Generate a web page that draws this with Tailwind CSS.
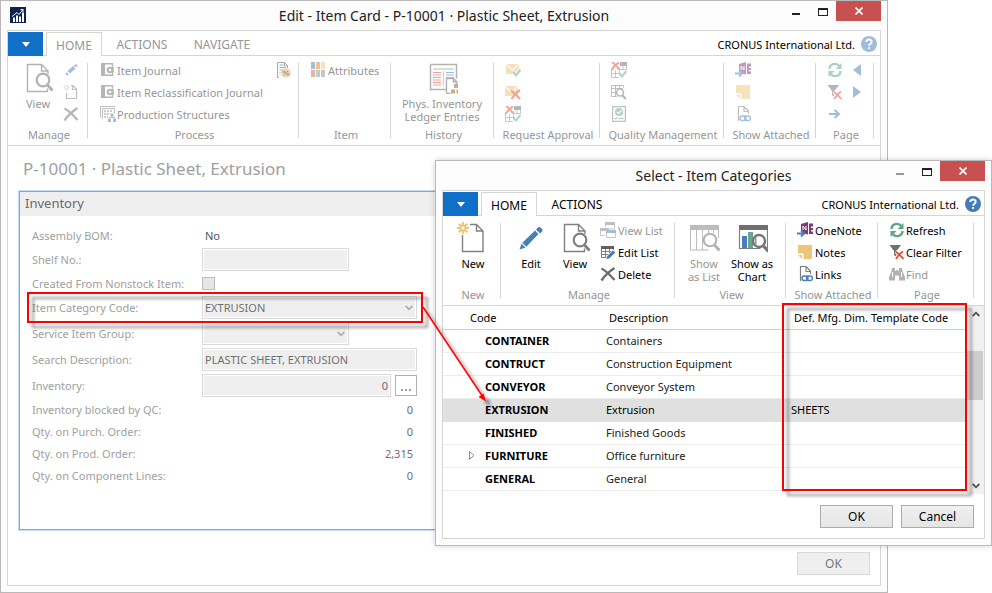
<!DOCTYPE html>
<html lang="en">
<head>
<meta charset="utf-8">
<meta name="viewport" content="width=device-width, initial-scale=1">
<title>Item Card</title>
<script src="https://cdn.jsdelivr.net/npm/@tailwindcss/browser@4"></script>
</head>
<body class="relative min-h-screen overflow-hidden bg-white font-['Noto_Sans','Open_Sans',sans-serif] text-[11px] leading-[13px] text-black">

<!-- Icon library -->
<svg class="hidden" aria-hidden="true">
  <symbol id="view" viewBox="0 0 32 32"><g fill="none" stroke="#808080"><path d="M16 29.5H5.5v-27h14l6.500 6.500v3M19.500 2.500v6.500h6.500" stroke-width="1.400"/><circle cx="21" cy="18" r="6.300" stroke-width="2.200"/><path d="M25.500 23l5 5.500" stroke-width="3"/><path d="M16 29.500h9.500v-3" stroke-width="1.400"/></g></symbol>
  <symbol id="new" viewBox="0 0 32 32"><path d="M5.500 13v16.500h20.500V9l-6.500-6.500H13M19.500 2.500v6.500h6.500" fill="none" stroke="#808080" stroke-width="1.400"/><g stroke="#eec67a" stroke-width="2" fill="none"><circle cx="6" cy="6" r="2.500"/><path d="M6 0v3M6 9v3M0 6h3M9 6h3M1.800 1.800l2 2M8.200 8.200l2 2M1.800 10.200l2-2M8.200 3.800l2-2"/></g></symbol>
  <symbol id="edit" viewBox="0 0 32 32"><path d="M4.500 27.500l2-6 4 4zM7.300 20.700L20 8.500l3.500 3.500L11.300 24.700zM21 7.500l2.500-2.500 1.500 0 2.500 2.500 0 1.500-2.500 2.500z" fill="#4a7ebb"/></symbol>
  <symbol id="history" viewBox="0 0 32 32"><path d="M4.500 2.500h26v14M20 27.500H4.500v-25" fill="none" stroke="#808080" stroke-width="1.500"/><path d="M7 6h21v2H7z" fill="#c4c4c4"/><path d="M7 10.500h8M7 13h8M7 15.500h8M7 18h8M7 20.500h8M7 23h8" stroke="#dd6050" stroke-width="1.200"/><path d="M20 10.500h8M20 13h8M20 15.500h8" stroke="#5a8fc8" stroke-width="1.200"/><path d="M17.500 9v15" stroke="#b0b0b0"/><path d="M20.500 31.500v-15h7l3.500 3.500v2M27.500 16.500v3.500h3.500M20.500 31.500h4" fill="none" stroke="#808080" stroke-width="1.400"/><path d="M28 22h4v4h-4zM25 27.500h4v4h-4zM30.500 27.500H34v4h-3.500z" fill="#a5763f"/></symbol>
  <symbol id="aslist" viewBox="0 0 32 32"><path d="M2 3h29v5H2z" fill="#909090"/><path d="M2.500 8v20h18M30.500 8v8M8.500 8v20M14.500 8v20M20.500 8v3M25.500 8v3" fill="none" stroke="#909090"/><circle cx="22" cy="18" r="6.300" fill="#fff" stroke="#808080" stroke-width="2"/><path d="M26.500 23l5 5.500" stroke="#808080" stroke-width="3"/></symbol>
  <symbol id="chart" viewBox="0 0 32 32"><path d="M3 3h29v5H3z" fill="#6f6f6f"/><path d="M3.500 8v18.500h21M31.500 8v18" fill="none" stroke="#808080" stroke-width="1.200"/><path d="M6 14h5v12H6z" fill="#4a7ebb"/><path d="M12 10h5v16h-5z" fill="#6ba58b"/><circle cx="23" cy="19" r="6" fill="#fff" stroke="#757575" stroke-width="2.400"/><path d="M19 15h1.500v8H19z" fill="#999"/><path d="M27.500 24l5 5.500" stroke="#757575" stroke-width="3.200"/></symbol>

  <symbol id="pencil" viewBox="0 0 16 16"><path d="M2.500 13.500l1-3.500 2.500 2.500zM4.500 9l5.500-5 2.500 2.500-5.500 5zM11 3.500L13 2l1.500 1.500-1.500 2z" fill="#4a7ebb"/></symbol>
  <symbol id="newdoc" viewBox="0 0 16 16"><path d="M3.500 9v5.500h10V5L10 1.500H8M9.500 1.500v4h4" fill="none" stroke="#808080" stroke-width="1.200"/><path d="M3.500.5v6M.5 3.500h6M1.300 1.300l4.400 4.400M5.700 1.300L1.300 5.700" stroke="#eeb765"/><circle cx="3.500" cy="3.500" r="1" fill="#fff"/></symbol>
  <symbol id="delete" viewBox="0 0 16 16"><path d="M1.500 2.500c4 2 9 7 13 11.500M14.500 2C10 5 5 9 1.500 14.500" fill="none" stroke="#6f6f6f" stroke-width="2.400"/></symbol>
  <symbol id="journal" viewBox="0 0 16 16"><path d="M1 1h4v13H1z" fill="#6f6f6f"/><path d="M5 1.700h7.500v3M12.500 11v2.300H5" fill="none" stroke="#6f6f6f" stroke-width="1.400"/><circle cx="10" cy="8" r="2.300" fill="none" stroke="#6f6f6f" stroke-width="2"/><path d="M12 5h1.800v6H12z" fill="#6f6f6f"/></symbol>
  <symbol id="structure" viewBox="0 0 16 16"><path d="M.5 11.500V.5H15M2.500 13V2.500H14.500v5" fill="none" stroke="#808080"/><path d="M4 5h9M4 8h6M4 11h4" stroke="#808080" stroke-width="1.500" stroke-dasharray="2 1"/><path d="M9.500 13v-1.500h5V13M12 9v3" stroke="#4a7ebb" fill="none"/><path d="M10.500 7.500h3v3h-3zM8 13h3v3H8zM13 13h3v3h-3z" fill="#4a7ebb"/></symbol>
  <symbol id="percent" viewBox="0 0 16 16"><path d="M4 15.500H2.500V.5h7l3 3V6M9.500.5v3.500h3" fill="none" stroke="#707070"/><path d="M4.500 3h4M4.500 5.500h6M4.500 8h3" stroke="#4a7ebb"/><path d="M4.500 10.500h1M4.500 13h1" stroke="#707070"/><circle cx="11" cy="11" r="5" fill="#f0c48c"/><path d="M13 8.500l-4 5" stroke="#444"/><circle cx="9" cy="9.800" r="1" fill="none" stroke="#444" stroke-width=".8"/><circle cx="13" cy="12.300" r="1" fill="none" stroke="#444" stroke-width=".8"/></symbol>
  <symbol id="attributes" viewBox="0 0 16 16"><path d="M1 0h4v7H1z" fill="#4a7ebb"/><path d="M6 0h4v7H6z" fill="#e08030"/><path d="M11 0h4v7h-4z" fill="#eec67a"/><path d="M1 8h4v7H1z" fill="#dd6050"/><path d="M6 8h4v7H6z" fill="#6ba58b"/><path d="M11 8h4v7h-4z" fill="#909090"/></symbol>
  <symbol id="mailok" viewBox="0 0 16 16"><path d="M1 2h13v10H1z" fill="#edc379"/><path d="M1 2.500l6.500 5.500L14 2.500" fill="none" stroke="#fff" stroke-width="1.200"/><path d="M8 10.500l3 3 4.500-6" fill="none" stroke="#fff" stroke-width="4"/><path d="M8 10l3 3.300L15.500 7.500" fill="none" stroke="#6ba58b" stroke-width="2.200"/></symbol>
  <symbol id="mailno" viewBox="0 0 16 16"><path d="M0 2h13v10H0z" fill="#edc379"/><path d="M0 2.500l6.500 5.500L13 2.500" fill="none" stroke="#fff" stroke-width="1.200"/><path d="M6 6.500c3 2 6 5 9 8.500M15 6c-3 2-6 5-8.500 9" fill="none" stroke="#dc5038" stroke-width="2.200"/></symbol>
  <symbol id="gridmix" viewBox="0 0 16 16"><path d="M9 0h7v4H9z" fill="#707070"/><path d="M.5 8v7.500H8M.5 11.500H8M4.500 8v7.500M15.500 4v4M8.500 5v7M8 7.500h7M12 4v4M8 11.500h2" fill="none" stroke="#909090"/><path d="M1 0c3 2 5 4 7 7.500M8 .5C5 2 3 4 .5 8" fill="none" stroke="#dc5038" stroke-width="2"/><path d="M8.500 12l2.500 2.500L15.500 9" fill="none" stroke="#6ba58b" stroke-width="2"/></symbol>
  <symbol id="gridfind" viewBox="0 0 16 16"><path d="M.5 12.500V1.500h12v2M.5 12.500H6M1 4.500h11M1 8.500h4M4.500 2v10M8.500 2v2" fill="none" stroke="#808080"/><circle cx="9" cy="8.500" r="3.500" fill="#fff" stroke="#707070" stroke-width="1.500"/><path d="M11.500 11.500L15 15" stroke="#707070" stroke-width="2.200"/></symbol>
  <symbol id="quality" viewBox="0 0 16 16"><path d="M1.600.600h12.800v14.800H1.600z" fill="none" stroke="#808080" stroke-width="1.200"/><circle cx="8" cy="6" r="4" fill="#6ba58b"/><path d="M6 6l1.500 1.500L10.500 4.500" fill="none" stroke="#fff" stroke-width="1.200"/><path d="M3.500 12l1 1.200 1.500-2.200M7.500 12.500h2M10.500 12.500h2" fill="none" stroke="#606060"/></symbol>
  <symbol id="onenote" viewBox="0 0 16 16"><path d="M4 2l7-2v12.500L4 11z" fill="#80397b"/><path d="M12 1.500h4v3h-2V6h2v2h-2v1.500h2V12h-4z" fill="#80397b"/><path d="M6 8V4l3 4V4" fill="none" stroke="#fff"/><path d="M0 11.500h6" stroke="#fff" stroke-width="4"/><path d="M0 11.500h6.500M4 8.500l3.200 3L4 14.500" fill="none" stroke="#4a7ebb" stroke-width="1.800"/></symbol>
  <symbol id="note" viewBox="0 0 16 16"><path d="M1 1h14v14H6.500V9.500H1z" fill="#eec67a"/><path d="M1 11h4v4z" fill="#eec67a"/></symbol>
  <symbol id="links" viewBox="0 0 16 16"><path d="M4 14.500H3.500V.500H9l4.500 4.500V8M9 .5V5.500h4.500" fill="none" stroke="#808080" stroke-width="1.200"/><g fill="none" stroke="#4a7ebb" stroke-width="1.400"><rect x="5" y="10" width="6" height="4.500" rx="2.200"/><rect x="9.500" y="10" width="6" height="4.500" rx="2.200"/></g></symbol>
  <symbol id="refresh" viewBox="0 0 16 16"><path d="M2.500 7c0-5.500 7-6.500 10-3M13.500 9c0 5.500-7 6.500-10 3" fill="none" stroke="#5fa583" stroke-width="2.400"/><path d="M14.500 1v6H8.500zM1.500 15V9h6z" fill="#5fa583"/></symbol>
  <symbol id="nofilter" viewBox="0 0 16 16"><path d="M.5 1h11.500L7.500 7v6L5 11V7z" fill="#707070"/><path d="M6.500 7.500c3 2 5 4 8 7.500M14 7.500c-3 2-5 4-7 7.500" fill="none" stroke="#fff" stroke-width="3.500"/><path d="M6.500 7.500c3 2 5 4 8 7.500M14 7.500c-3 2-5 4-7 7.500" fill="none" stroke="#dc5038" stroke-width="1.800"/></symbol>
  <symbol id="goto" viewBox="0 0 16 16"><path d="M2 8h10M7.500 4l4.500 4-4.500 4" fill="none" stroke="#4a7ebb" stroke-width="2"/></symbol>
  <symbol id="prev" viewBox="0 0 16 16"><path d="M12 2v12L4 8z" fill="#4a7ebb"/></symbol>
  <symbol id="next" viewBox="0 0 16 16"><path d="M4 2v12l8-6z" fill="#4a7ebb"/></symbol>
  <symbol id="viewlist" viewBox="0 0 16 16"><path d="M5 0h10v3H5zM0 6h9v3H0z" fill="#808080"/><path d="M5.500 3v2M14.500 3v4H9.500M.5 9v4.500h4" fill="none" stroke="#909090"/><path d="M6 8h10v3H6z" fill="#4a7ebb"/><path d="M6.500 11v4.500h9V11" fill="none" stroke="#909090"/></symbol>
  <symbol id="editlist" viewBox="0 0 16 16"><path d="M1 2h13v3H1z" fill="#606060"/><path d="M1.500 5v8.500H6M13.500 5v1M2 7.500h9M2 10.500h6M5.500 5v8M9.500 5v4" fill="none" stroke="#808080"/><path d="M6 15.500l1-3.500 6-6 2.500 2.500-6 6z" fill="#4a7ebb" stroke="#fff" stroke-width=".5"/></symbol>
  <symbol id="find" viewBox="0 0 16 16"><path d="M3 2h3v3h1V4h2v1h1V2h3l.5 3L16 11v3.500h-6V9.500H6v5H0V11l2.500-6z" fill="#808080"/><path d="M3.500 6v5M12.500 6v5" stroke="#fff"/></symbol>
  <symbol id="help" viewBox="0 0 16 16"><circle cx="8" cy="8" r="8" fill="#447bb8"/><path d="M5.300 6c0-3.400 5.400-3.300 5.400-.2 0 2-2.600 1.900-2.600 4M8.100 11v2" fill="none" stroke="#fff" stroke-width="1.900"/></symbol>
  <symbol id="chevdown" viewBox="0 0 8 6"><path d="M.7 1L4 4.300 7.300 1" fill="none" stroke="currentColor" stroke-width="1.800"/></symbol>
</svg>

<!-- Item Card window -->
<section aria-label="Item Card" class="absolute top-0 right-[104px] left-0 flex min-h-screen flex-col border border-[#b9b9b9] bg-[#fcfcfc] px-[6px] pb-[6px]">
  <header class="relative flex h-[29px] items-center justify-center">
    <svg class="absolute top-[6px] left-[3px] size-4" viewBox="0 0 16 16" aria-hidden="true"><path d="M0 0h16v16H0z" fill="#0c2350"/><path d="M3 10.500h2V15H3zM6 8.500h2V15H6zM9 9.500h2V15H9zM12 5.500h2V15h-2z" fill="#fff"/><path d="M2 9.500l5-4 2 2 4-5M10.500 2.500H13V5" fill="none" stroke="#fff"/></svg>
    <h1 class="text-[14px] leading-5 text-[#222]">Edit - Item Card - P-10001 · Plastic Sheet, Extrusion</h1>
    <div class="absolute top-0 right-0 flex">
      <button aria-label="Minimize" class="flex h-5 w-7 items-center justify-center pt-[2px] pl-1"><span class="mt-1 h-[2px] w-2 bg-[#222]"></span></button>
      <button aria-label="Maximize" class="flex h-5 w-7 items-center justify-center pt-px pl-[2px]"><span class="h-2 w-[10px] border border-t-2 border-[#222]"></span></button>
      <button aria-label="Close" class="flex h-5 w-[45px] items-center justify-center bg-[#c75050]"><svg class="size-2" viewBox="0 0 8 8"><path d="M.5.5l7 7M7.500.5l-7 7" stroke="#fff" stroke-width="1.600"/></svg></button>
    </div>
  </header>

  <div class="flex flex-1 flex-col border border-[#d5d5d5] bg-white">
    <nav class="flex h-[25px] items-end text-[12px] leading-4 text-[#969696]">
      <button aria-label="Application menu" class="flex h-6 w-[35px] items-center justify-center bg-[#1070c8]"><span class="size-0 border-x-4 border-t-[5px] border-x-transparent border-t-white"></span></button>
      <div class="h-px w-[3px] bg-[#d5d5d5]"></div>
      <button class="h-6 w-14 border border-b-0 border-[#d5d5d5] pt-[2px]">HOME</button>
      <div class="flex h-6 flex-1 items-center border-b border-[#d5d5d5]">
        <button class="w-20 pt-[2px]">ACTIONS</button>
        <button class="w-20 pt-[2px]">NAVIGATE</button>
        <span class="ml-auto pt-[2px] text-[11px] text-black">CRONUS International Ltd.</span>
        <button aria-label="Help" class="mr-[3px] ml-[6px] opacity-50"><svg class="size-4"><use href="#help"/></svg></button>
      </div>
    </nav>

    <div class="flex border-b border-[#d5d5d5] pt-[3px] text-[#969696]">
      <div class="flex w-[79px] flex-col">
        <div class="flex h-[66px]">
          <button class="flex w-[60px] flex-col items-center pt-[3px]"><svg class="size-8 opacity-60"><use href="#view"/></svg><span class="mt-[3px]">View</span></button>
          <div class="-ml-[5px] opacity-50">
            <button aria-label="Edit" class="flex h-[22px] items-center"><svg class="size-4"><use href="#pencil"/></svg></button>
            <button aria-label="New" class="flex h-[22px] items-center"><svg class="size-4"><use href="#newdoc"/></svg></button>
            <button aria-label="Delete" class="flex h-[22px] items-center"><svg class="size-4"><use href="#delete"/></svg></button>
          </div>
        </div>
        <div class="h-5 pl-[3px] text-center leading-5">Manage</div>
      </div>
      <div class="mt-1 mb-[7px] w-px bg-[#d5d5d5]"></div>
      <div class="flex w-[210px] flex-col">
        <div class="flex h-[66px] justify-between pr-[7px] pl-3">
          <div>
            <button class="flex h-[22px] items-center gap-px"><svg class="size-4 opacity-50"><use href="#journal"/></svg>Item Journal</button>
            <button class="flex h-[22px] items-center gap-px"><svg class="size-4 opacity-50"><use href="#journal"/></svg>Item Reclassification Journal</button>
            <button class="flex h-[22px] items-center gap-px"><svg class="size-4 opacity-50"><use href="#structure"/></svg>Production Structures</button>
          </div>
          <button aria-label="Discounts" class="flex h-[22px] items-center"><svg class="size-4 opacity-60"><use href="#percent"/></svg></button>
        </div>
        <div class="h-5 pl-[3px] text-center leading-5">Process</div>
      </div>
      <div class="mt-1 mb-[7px] w-px bg-[#d5d5d5]"></div>
      <div class="flex w-[91px] flex-col">
        <div class="h-[66px] pl-[11px]">
          <button class="flex h-[22px] items-center gap-[2px]"><svg class="size-4 opacity-50"><use href="#attributes"/></svg>Attributes</button>
        </div>
        <div class="h-5 pl-[3px] text-center leading-5">Item</div>
      </div>
      <div class="mt-1 mb-[7px] w-px bg-[#d5d5d5]"></div>
      <div class="flex w-[102px] flex-col">
        <button class="flex h-[66px] flex-col items-center pt-[3px]"><svg class="size-8 overflow-visible opacity-60"><use href="#history"/></svg><span class="mt-[3px]">Phys. Inventory<br>Ledger Entries</span></button>
        <div class="h-5 pl-[3px] text-center leading-5">History</div>
      </div>
      <div class="mt-1 mb-[7px] w-px bg-[#d5d5d5]"></div>
      <div class="flex w-[105px] flex-col">
        <div class="h-[66px] pl-[11px] opacity-50">
          <button aria-label="Approve request" class="flex h-[22px] items-center"><svg class="size-4"><use href="#mailok"/></svg></button>
          <button aria-label="Cancel request" class="flex h-[22px] items-center"><svg class="size-4"><use href="#mailno"/></svg></button>
          <button aria-label="Approvals" class="flex h-[22px] items-center"><svg class="size-4"><use href="#gridmix"/></svg></button>
        </div>
        <div class="h-5 pl-[3px] text-center leading-5 whitespace-nowrap">Request Approval</div>
      </div>
      <div class="mt-1 mb-[7px] w-px bg-[#d5d5d5]"></div>
      <div class="flex w-[123px] flex-col">
        <div class="h-[66px] pl-[11px] opacity-50">
          <button aria-label="Quality tests" class="flex h-[22px] items-center"><svg class="size-4"><use href="#gridmix"/></svg></button>
          <button aria-label="Find tests" class="flex h-[22px] items-center"><svg class="size-4"><use href="#gridfind"/></svg></button>
          <button aria-label="Quality orders" class="flex h-[22px] items-center"><svg class="size-4"><use href="#quality"/></svg></button>
        </div>
        <div class="h-5 pl-[3px] text-center leading-5 whitespace-nowrap">Quality Management</div>
      </div>
      <div class="mt-1 mb-[7px] w-px bg-[#d5d5d5]"></div>
      <div class="flex w-[91px] flex-col">
        <div class="h-[66px] pl-[11px] opacity-50">
          <button aria-label="OneNote" class="flex h-[22px] items-center"><svg class="size-4"><use href="#onenote"/></svg></button>
          <button aria-label="Notes" class="flex h-[22px] items-center"><svg class="size-4"><use href="#note"/></svg></button>
          <button aria-label="Links" class="flex h-[22px] items-center"><svg class="size-4"><use href="#links"/></svg></button>
        </div>
        <div class="h-5 pl-[3px] text-center leading-5 whitespace-nowrap">Show Attached</div>
      </div>
      <div class="mt-1 mb-[7px] w-px bg-[#d5d5d5]"></div>
      <div class="flex w-[57px] flex-col">
        <div class="flex h-[66px] gap-[6px] pl-[11px] opacity-50">
          <div>
            <button aria-label="Refresh" class="flex h-[22px] items-center"><svg class="size-4"><use href="#refresh"/></svg></button>
            <button aria-label="Clear filter" class="flex h-[22px] items-center"><svg class="size-4"><use href="#nofilter"/></svg></button>
            <button aria-label="Go to" class="flex h-[22px] items-center"><svg class="size-4"><use href="#goto"/></svg></button>
          </div>
          <div>
            <button aria-label="Previous" class="flex h-[22px] items-center"><svg class="size-4"><use href="#prev"/></svg></button>
            <button aria-label="Next" class="flex h-[22px] items-center"><svg class="size-4"><use href="#next"/></svg></button>
          </div>
        </div>
        <div class="h-5 pl-[3px] text-center leading-5">Page</div>
      </div>
      <div class="mt-1 mb-[7px] w-px bg-[#d5d5d5]"></div>
    </div>

    <h2 class="mt-[11px] pl-[15px] text-[17px] leading-6 text-[#a0a0a0]">P-10001 · Plastic Sheet, Extrusion</h2>

    <section class="mx-[11px] mt-[10px] flex-1 border border-[#76a9f0] shadow-[0_0_0_1px_#c6dcfb]">
      <h3 class="h-6 bg-[#efefef] pl-[5px] text-[13px] leading-[23px] text-[#6a6a6a]">Inventory</h3>
      <form class="mt-2 pl-3 text-[#a0a0a0]">
        <div class="flex h-[22px] items-center"><span class="w-[170px]">Assembly BOM:</span><span class="pl-[3px] text-[#555]">No</span></div>
        <div class="flex h-[26px] items-center"><label for="shelf" class="w-[170px]">Shelf No.:</label><input id="shelf" disabled class="h-[23px] w-[147px] border border-[#d9d9d9] bg-[#efefef] px-[2px] inset-ring inset-ring-white"></div>
        <div class="flex h-[22px] items-center"><label for="nonstock" class="w-[170px] whitespace-nowrap">Created From Nonstock Item:</label><input id="nonstock" type="checkbox" disabled class="size-[13px] appearance-none border border-[#bcbcbc] bg-[#e6e6e6]"></div>
        <div class="flex h-[26px] items-center"><label for="category" class="w-[170px]">Item Category Code:</label>
          <div class="relative"><select id="category" disabled class="h-[23px] w-[215px] appearance-none border border-[#d9d9d9] bg-[#efefef] px-[2px] text-[#6f6f6f] inset-ring inset-ring-white"><option>EXTRUSION</option></select><svg class="absolute top-[9px] right-[4px] h-[6px] w-2 text-[#b0b0b0]"><use href="#chevdown"/></svg></div></div>
        <div class="flex h-[26px] items-center"><label for="service" class="w-[170px]">Service Item Group:</label>
          <div class="relative"><select id="service" disabled class="h-[23px] w-[147px] appearance-none border border-[#d9d9d9] bg-[#efefef] px-[2px] inset-ring inset-ring-white"><option></option></select><svg class="absolute top-[9px] right-[4px] h-[6px] w-2 text-[#b0b0b0]"><use href="#chevdown"/></svg></div></div>
        <div class="flex h-[26px] items-center"><label for="search" class="w-[170px]">Search Description:</label><input id="search" disabled value="PLASTIC SHEET, EXTRUSION" class="h-[23px] w-[215px] border border-[#d9d9d9] bg-[#efefef] px-[2px] text-[#6f6f6f] inset-ring inset-ring-white"></div>
        <div class="flex h-[26px] items-center"><label for="inventory" class="w-[170px]">Inventory:</label><input id="inventory" disabled value="0" class="h-[23px] w-[189px] border border-[#d9d9d9] bg-[#efefef] px-[2px] text-right text-[#6f6f6f] inset-ring inset-ring-white"><button type="button" aria-label="Look up" class="ml-1 flex h-[21px] w-[22px] items-end justify-center gap-[2px] border border-[#b0b0b0] pb-1"><span class="size-[2px] bg-[#a0a0a0]"></span><span class="size-[2px] bg-[#a0a0a0]"></span><span class="size-[2px] bg-[#a0a0a0]"></span></button></div>
        <div class="flex h-[22px] items-center"><span class="w-[170px]">Inventory blocked by QC:</span><span class="w-[211px] text-right text-[#6f6f6f]">0</span></div>
        <div class="flex h-[22px] items-center"><span class="w-[170px]">Qty. on Purch. Order:</span><span class="w-[211px] text-right text-[#6f6f6f]">0</span></div>
        <div class="flex h-[22px] items-center"><span class="w-[170px]">Qty. on Prod. Order:</span><span class="w-[211px] text-right text-[#6f6f6f]">2,315</span></div>
        <div class="flex h-[22px] items-center"><span class="w-[170px]">Qty. on Component Lines:</span><span class="w-[211px] text-right text-[#6f6f6f]">0</span></div>
      </form>
    </section>
    <footer class="flex justify-end pt-[22px] pr-[10px] pb-[10px]">
      <button disabled class="h-[23px] w-[73px] border border-[#d9d9d9] bg-[#efefef] text-[12px] text-[#777]">OK</button>
    </footer>
  </div>
</section>

<!-- Item Categories window -->
<section aria-label="Item Categories" class="absolute top-[160px] right-0 left-[435px] border border-[#b9b9b9] bg-[#fcfcfc] px-[6px] pb-[6px] shadow-[0_0_6px_#00000030]">
  <header class="relative flex h-[29px] items-center justify-center">
    <h1 class="text-[14px] leading-5 text-[#222]">Select - Item Categories</h1>
    <div class="absolute top-0 right-0 flex">
      <button aria-label="Minimize" class="flex h-5 w-7 items-center justify-center pt-[2px] pl-1"><span class="mt-1 h-[2px] w-2 bg-[#999]"></span></button>
      <button aria-label="Maximize" class="flex h-5 w-7 items-center justify-center pt-px pl-[2px]"><span class="h-2 w-[10px] border border-t-2 border-[#222]"></span></button>
      <button aria-label="Close" class="flex h-5 w-[45px] items-center justify-center bg-[#c75050]"><svg class="size-2" viewBox="0 0 8 8"><path d="M.5.5l7 7M7.500.5l-7 7" stroke="#fff" stroke-width="1.600"/></svg></button>
    </div>
  </header>

  <div class="border border-[#d5d5d5] bg-white">
    <nav class="flex h-[25px] items-end text-[12px] leading-4">
      <button aria-label="Application menu" class="flex h-6 w-[35px] items-center justify-center bg-[#1070c8]"><span class="size-0 border-x-4 border-t-[5px] border-x-transparent border-t-white"></span></button>
      <div class="h-px w-[3px] bg-[#d5d5d5]"></div>
      <button class="h-6 w-14 border border-b-0 border-[#d5d5d5] pt-[2px]">HOME</button>
      <div class="flex h-6 flex-1 items-center border-b border-[#d5d5d5]">
        <button class="w-20 pt-[2px]">ACTIONS</button>
        <span class="ml-auto pt-[2px] text-[11px]">CRONUS International Ltd.</span>
        <button aria-label="Help" class="mr-[3px] ml-[6px]"><svg class="size-4"><use href="#help"/></svg></button>
      </div>
    </nav>

    <div class="flex border-b border-[#d5d5d5] pt-[3px]">
      <div class="flex w-[57px] flex-col">
        <button class="flex h-[66px] flex-col items-center pt-[3px] pl-[3px]"><svg class="size-8"><use href="#new"/></svg><span class="mt-[3px]">New</span></button>
        <div class="h-5 pl-[3px] text-center leading-5 text-[#969696]">New</div>
      </div>
      <div class="mt-1 mb-[7px] w-px bg-[#d5d5d5]"></div>
      <div class="flex w-[173px] flex-col">
        <div class="flex h-[66px] pl-2">
          <button class="flex w-11 flex-col items-center pt-[3px]"><svg class="size-8"><use href="#edit"/></svg><span class="mt-[3px]">Edit</span></button>
          <button class="flex w-11 flex-col items-center pt-[3px]"><svg class="size-8"><use href="#view"/></svg><span class="mt-[3px]">View</span></button>
          <div class="pl-[3px] whitespace-nowrap">
            <button class="flex h-[22px] items-center gap-[2px] text-[#969696]"><svg class="size-4 opacity-50"><use href="#viewlist"/></svg>View List</button>
            <button class="flex h-[22px] items-center gap-[2px]"><svg class="size-4"><use href="#editlist"/></svg>Edit List</button>
            <button class="flex h-[22px] items-center gap-[2px]"><svg class="size-4"><use href="#delete"/></svg>Delete</button>
          </div>
        </div>
        <div class="h-5 pl-[3px] text-center leading-5 text-[#969696]">Manage</div>
      </div>
      <div class="mt-1 mb-[7px] w-px bg-[#d5d5d5]"></div>
      <div class="flex w-[110px] flex-col">
        <div class="flex h-[66px] pl-[5px]">
          <button class="flex w-12 flex-col items-center pt-[3px] text-[#969696]"><svg class="size-8 opacity-60"><use href="#aslist"/></svg><span class="mt-[3px]">Show<br>as List</span></button>
          <button class="flex w-12 flex-col items-center pt-[3px]"><svg class="size-8 overflow-visible"><use href="#chart"/></svg><span class="mt-[3px] whitespace-nowrap">Show as<br>Chart</span></button>
        </div>
        <div class="h-5 pl-[3px] text-center leading-5 text-[#969696]">View</div>
      </div>
      <div class="mt-1 mb-[7px] w-px bg-[#d5d5d5]"></div>
      <div class="flex w-[91px] flex-col">
        <div class="h-[66px] pl-[11px]">
          <button class="flex h-[22px] items-center gap-[2px]"><svg class="size-4"><use href="#onenote"/></svg>OneNote</button>
          <button class="flex h-[22px] items-center gap-[2px]"><svg class="size-4"><use href="#note"/></svg>Notes</button>
          <button class="flex h-[22px] items-center gap-[2px]"><svg class="size-4"><use href="#links"/></svg>Links</button>
        </div>
        <div class="h-5 pl-[3px] text-center leading-5 whitespace-nowrap text-[#969696]">Show Attached</div>
      </div>
      <div class="mt-1 mb-[7px] w-px bg-[#d5d5d5]"></div>
      <div class="flex w-[95px] flex-col">
        <div class="h-[66px] pl-[11px] whitespace-nowrap">
          <button class="flex h-[22px] items-center gap-px"><svg class="size-4"><use href="#refresh"/></svg>Refresh</button>
          <button class="flex h-[22px] items-center gap-px"><svg class="size-4"><use href="#nofilter"/></svg>Clear Filter</button>
          <button class="flex h-[22px] items-center gap-px text-[#969696]"><svg class="size-4 opacity-60"><use href="#find"/></svg>Find</button>
        </div>
        <div class="h-5 pl-[3px] text-center leading-5 text-[#969696]">Page</div>
      </div>
      <div class="mt-1 mb-[7px] w-px bg-[#d5d5d5]"></div>
    </div>

    <div class="flex min-h-[188px]">
      <div class="flex-1">
        <table class="w-full table-fixed border-collapse text-left">
          <thead>
            <tr class="h-[23px] border-b border-[#d0d0d0]">
              <th class="w-[160px] pl-[27px] font-normal">Code</th>
              <th class="w-[185px] pl-[6px] font-normal">Description</th>
              <th class="pl-[6px] font-normal whitespace-nowrap">Def. Mfg. Dim. Template Code</th>
            </tr>
          </thead>
          <tbody>
            <tr class="h-[23px] border-b border-[#ececec]"><td class="pl-[42px] font-bold">CONTAINER</td><td class="pl-[3px] text-[#222]">Containers</td><td></td></tr>
            <tr class="h-[23px] border-b border-[#ececec]"><td class="pl-[42px] font-bold">CONTRUCT</td><td class="pl-[3px] text-[#222]">Construction Equipment</td><td></td></tr>
            <tr class="h-[23px] border-b border-[#ececec]"><td class="pl-[42px] font-bold">CONVEYOR</td><td class="pl-[3px] text-[#222]">Conveyor System</td><td></td></tr>
            <tr class="h-[23px] border-b border-[#e0e0e0] bg-[#e0e0e0]"><td class="pl-[42px] font-bold">EXTRUSION</td><td class="pl-[3px]">Extrusion</td><td class="pl-[3px]">SHEETS</td></tr>
            <tr class="h-[23px] border-b border-[#ececec]"><td class="pl-[42px] font-bold">FINISHED</td><td class="pl-[3px] text-[#222]">Finished Goods</td><td></td></tr>
            <tr class="h-[23px] border-b border-[#ececec]"><td class="pl-[26px] font-bold"><div class="flex items-center"><button aria-label="Expand" class="w-4"><svg class="h-[9px] w-[6px]" viewBox="0 0 6 9"><path d="M.5.7v7.600l4.500-3.800z" fill="#fff" stroke="#888"/></svg></button>FURNITURE</div></td><td class="pl-[3px] text-[#222]">Office furniture</td><td></td></tr>
            <tr class="h-[23px] border-b border-[#ececec]"><td class="pl-[42px] font-bold">GENERAL</td><td class="pl-[3px] text-[#222]">General</td><td></td></tr>
          </tbody>
        </table>
      </div>
      <div class="flex w-[17px] flex-col items-center bg-[#f0f0f0] text-[#505050]">
        <button aria-label="Scroll up" class="flex h-4 w-full items-center justify-center"><svg class="h-[6px] w-2 rotate-180"><use href="#chevdown"/></svg></button>
        <div class="flex w-full flex-1 flex-col pt-[29px] pr-px"><div class="h-[49px] bg-[#cdcdcd]"></div></div>
        <button aria-label="Scroll down" class="flex h-4 w-full items-center justify-center"><svg class="h-[6px] w-2"><use href="#chevdown"/></svg></button>
      </div>
    </div>

    <footer class="flex justify-end gap-2 pt-[11px] pr-[10px] pb-[10px]">
      <button class="h-[23px] w-[73px] border border-[#acacac] bg-linear-to-b from-[#f0f0f0] to-[#e5e5e5] text-[12px]">OK</button>
      <button class="h-[23px] w-[73px] border border-[#acacac] bg-linear-to-b from-[#f0f0f0] to-[#e5e5e5] text-[12px]">Cancel</button>
    </footer>
  </div>
</section>

<!-- Callouts: field, arrow and column -->
<svg class="pointer-events-none absolute top-0 left-0 h-[593px] w-[992px]" viewBox="0 0 992 593" aria-hidden="true">
  <defs><filter id="shade" filterUnits="userSpaceOnUse" x="0" y="0" width="992" height="593"><feDropShadow dx="5" dy="5" stdDeviation="1.800" flood-color="#000" flood-opacity=".4"/></filter></defs>
  <g filter="url(#shade)" fill="none" stroke="#f00" stroke-width="2">
    <rect x="28" y="293" width="394" height="29"/>
    <rect x="783" y="304" width="183" height="186"/>
    <path d="M423 307L483 397" stroke-width="1.500"/>
    <path d="M486 401.500l-7.500-4.500 5-3.500z" fill="#f00" stroke="none"/>
  </g>
</svg>
</body>
</html>
